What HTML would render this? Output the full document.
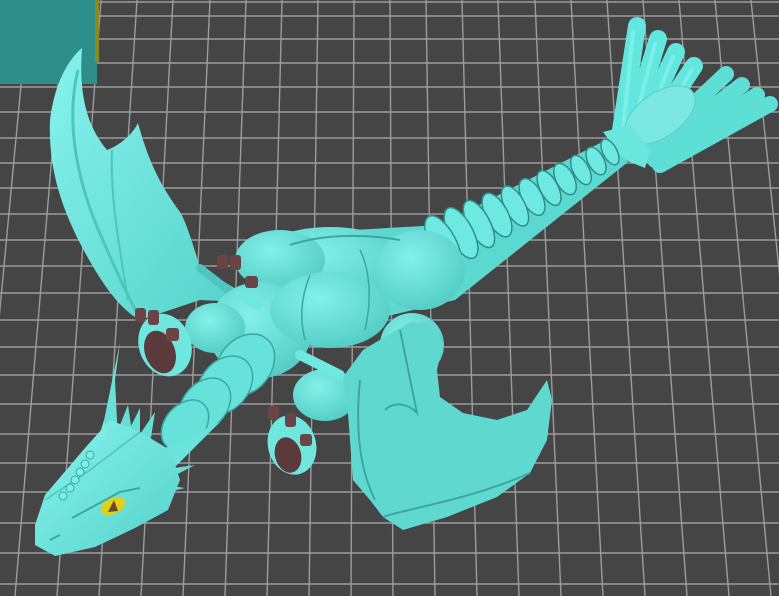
<!DOCTYPE html>
<html><head><meta charset="utf-8"><style>
html,body{margin:0;padding:0;background:#454545;overflow:hidden}
svg{display:block}
</style></head><body>
<svg width="779" height="596" viewBox="0 0 779 596" xmlns="http://www.w3.org/2000/svg">
<defs>
<linearGradient id="t" x1="0" y1="0" x2="1" y2="1"><stop offset="0" stop-color="#86f3ec"/><stop offset="1" stop-color="#55d2ca"/></linearGradient>
<radialGradient id="b" cx="0.4" cy="0.35" r="0.7"><stop offset="0" stop-color="#84f1ea"/><stop offset="1" stop-color="#52ccc4"/></radialGradient>
</defs>
<rect width="779" height="596" fill="#454545"/>
<g stroke="#9c9c9c" stroke-width="1.4" fill="none">
<path d="M0 2H779M0 16H779M0 39H779M0 63H779M0 87H779M0 112H779M0 138H779M0 163H779M0 188H779M0 214H779M0 240H779M0 266H779M0 293H779M0 320H779M0 347H779M0 375H779M0 404H779M0 434H779M0 463H779M0 492H779M0 523H779M0 553H779M0 584H779"/>
<path d="M-7 0L-69 596M29 0L-27 596M65 0L15 596M101 0L57 596M137 0L99 596M173 0L141 596M210 0L183 596M246 0L225 596M282 0L267 596M318 0L309 596M354 0L351 596M390 0L393 596M426 0L435 596M462 0L477 596M498 0L519 596M535 0L561 596M571 0L603 596M607 0L645 596M643 0L687 596M679 0L729 596M715 0L771 596M751 0L813 596M787 0L855 596"/>
</g>
<rect x="0" y="0" width="97" height="84" fill="#2e8e8a"/>
<rect x="95" y="0" width="4" height="62" fill="#8a8a20"/>

<!-- tail fin -->
<g stroke="#62e6dd" stroke-linecap="round" stroke-width="18">
<path d="M618 150L637 26"/><path d="M624 150L658 39"/><path d="M630 152L676 52"/><path d="M636 153L694 66"/>
</g>
<g stroke="#5edfd6" stroke-linecap="round" stroke-width="16">
<path d="M645 150L726 74"/><path d="M650 155L742 85"/><path d="M655 160L757 95"/><path d="M660 165L770 104"/>
</g>
<g stroke="#8cf7f0" stroke-linecap="round" stroke-width="4" opacity="0.6">
<path d="M633 32L622 140"/><path d="M655 44L630 140"/><path d="M673 57L640 140"/><path d="M692 70L650 140"/>
</g>
<ellipse cx="660" cy="115" rx="40" ry="22" transform="rotate(-35 660 115)" fill="#7be9e2" stroke="#58cdc5"/>
<path d="M603 132L630 125L650 150L645 168L625 160Z" fill="#6ae6de"/>

<!-- tail -->
<path d="M318 232L440 225L604 141L628 162L455 300L350 325Z" fill="#5bd9d1"/>
<g fill="#6ee9e1" stroke="#2f8f8a" stroke-width="1.5">
<ellipse cx="610" cy="152" rx="7" ry="14" transform="rotate(-28 610 152)"/>
<ellipse cx="596" cy="161" rx="8" ry="15" transform="rotate(-28 596 161)"/>
<ellipse cx="581" cy="170" rx="8" ry="16" transform="rotate(-28 581 170)"/>
<ellipse cx="565" cy="179" rx="9" ry="17" transform="rotate(-28 565 179)"/>
<ellipse cx="549" cy="188" rx="9" ry="19" transform="rotate(-28 549 188)"/>
<ellipse cx="532" cy="197" rx="10" ry="20" transform="rotate(-28 532 197)"/>
<ellipse cx="515" cy="206" rx="10" ry="22" transform="rotate(-28 515 206)"/>
<ellipse cx="497" cy="215" rx="11" ry="24" transform="rotate(-28 497 215)"/>
<ellipse cx="479" cy="224" rx="11" ry="26" transform="rotate(-28 479 224)"/>
<ellipse cx="461" cy="233" rx="12" ry="28" transform="rotate(-28 461 233)"/>
<ellipse cx="443" cy="243" rx="13" ry="30" transform="rotate(-28 443 243)"/>
</g>

<!-- left wing -->
<path d="M82 48C70 58 55 80 50 120C48 170 62 215 95 270C110 295 125 312 140 320L200 300L240 302L238 290L200 268C192 240 185 220 180 212C160 185 148 160 138 123C132 135 120 145 107 150C90 130 78 100 82 48Z" fill="url(#t)"/>
<path d="M78 70C68 110 70 170 105 245C120 280 130 300 138 315" stroke="#4cc6be" stroke-width="3" fill="none"/>
<path d="M112 150C110 200 120 250 128 300" stroke="#4cc6be" stroke-width="2" fill="none"/>
<path d="M200 268C215 280 230 292 245 300" stroke="#4cc6be" stroke-width="8" stroke-linecap="round" fill="none"/>

<!-- body -->
<g fill="url(#b)">
<ellipse cx="330" cy="265" rx="80" ry="38"/>
<ellipse cx="280" cy="260" rx="45" ry="30"/>
<ellipse cx="420" cy="270" rx="45" ry="40"/>
<ellipse cx="260" cy="330" rx="52" ry="48"/>
<ellipse cx="330" cy="310" rx="60" ry="38"/>
<ellipse cx="215" cy="328" rx="30" ry="25"/>
<ellipse cx="325" cy="395" rx="32" ry="26"/>
</g>
<path d="M290 245C320 235 360 233 400 240" stroke="#3aa8a1" stroke-width="2" fill="none"/>
<path d="M310 275C300 300 300 320 305 340" stroke="#3aa8a1" stroke-width="1.5" fill="none"/>
<path d="M360 250C370 270 372 300 365 330" stroke="#3aa8a1" stroke-width="1.5" fill="none"/>
<path d="M240 295L258 305" stroke="#6fe8df" stroke-width="10" stroke-linecap="round"/>
<path d="M300 355L340 375" stroke="#6fe8df" stroke-width="10" stroke-linecap="round"/>

<!-- front left paw -->
<ellipse cx="165" cy="345" rx="26" ry="32" transform="rotate(-20 165 345)" fill="#6fe6de"/>
<ellipse cx="160" cy="352" rx="15" ry="22" transform="rotate(-20 160 352)" fill="#5a3a3b"/>
<g fill="#6b4546"><rect x="135" y="308" width="11" height="14" rx="3"/><rect x="148" y="310" width="11" height="15" rx="3"/><rect x="166" y="328" width="13" height="13" rx="3"/>
<rect x="217" y="255" width="11" height="14" rx="3"/><rect x="230" y="255" width="11" height="15" rx="3"/><rect x="245" y="276" width="13" height="12" rx="3"/></g>

<!-- neck -->
<g fill="#66e2da" stroke="#3aa8a1" stroke-width="1.5">
<ellipse cx="245" cy="365" rx="26" ry="34" transform="rotate(40 245 365)"/>
<ellipse cx="225" cy="385" rx="24" ry="32" transform="rotate(40 225 385)"/>
<ellipse cx="205" cy="405" rx="22" ry="30" transform="rotate(40 205 405)"/>
<ellipse cx="185" cy="425" rx="20" ry="28" transform="rotate(40 185 425)"/>
</g>

<!-- front right paw -->
<ellipse cx="292" cy="445" rx="24" ry="30" transform="rotate(-15 292 445)" fill="#6fe6de"/>
<ellipse cx="288" cy="455" rx="13" ry="18" transform="rotate(-15 288 455)" fill="#5a3a3b"/>
<g fill="#6b4546"><rect x="268" y="406" width="11" height="14" rx="3"/><rect x="285" y="413" width="11" height="14" rx="3"/><rect x="300" y="434" width="12" height="12" rx="3"/></g>

<!-- hind knee + right wing -->
<circle cx="412" cy="345" r="32" fill="url(#b)"/>
<path d="M343 377L363 350L410 322L427 323L443 343L437 370L440 397L463 413L497 420L527 410L547 380L552 400L547 440L530 473L497 497L447 517L403 530L383 517L370 500L353 480L347 400Z" fill="#5fd8d0"/>
<path d="M385 410C395 400 410 405 417 413L400 330" fill="none" stroke="#3aa8a1" stroke-width="2"/>
<path d="M383 517C400 510 470 500 530 473" fill="none" stroke="#3aa8a1" stroke-width="2"/>
<path d="M360 380C355 430 360 470 375 500" fill="none" stroke="#3aa8a1" stroke-width="2"/>

<!-- horns -->
<path d="M100 440L120 342L115 380L118 440Z" fill="#68e0d8"/>
<path d="M140 460L220 422L170 472Z" fill="#6ae3db"/>
<g fill="#66ddd5"><path d="M118 430L128 405L132 432Z"/><path d="M128 432L140 408L140 436Z"/><path d="M136 440L155 412L150 444Z"/><path d="M160 470L195 465L170 478Z"/><path d="M165 485L185 488L168 492Z"/></g>

<!-- head -->
<path d="M35 525L45 495L85 448L110 420L140 432L170 450L180 480L168 510L135 528L95 547L55 556L35 545Z" fill="url(#t)"/>
<path d="M45 500L90 470L140 432" stroke="#4cc6be" stroke-width="1.5" fill="none"/>
<g fill="#7ef0e8" stroke="#3aa8a1" stroke-width="1"><circle cx="90" cy="455" r="4"/><circle cx="85" cy="464" r="4"/><circle cx="80" cy="472" r="4"/><circle cx="75" cy="480" r="4"/><circle cx="70" cy="488" r="4"/><circle cx="63" cy="496" r="4"/></g>
<path d="M98 440L104 420L108 440Z" fill="#7cebe3"/>
<path d="M72 518L120 492L140 488" stroke="#3aa8a1" stroke-width="2" fill="none"/>
<ellipse cx="113" cy="506" rx="13" ry="8" transform="rotate(-25 113 506)" fill="#e1cf1b"/>
<path d="M108 512L114 500L118 511Z" fill="#6b4a2a"/>
<path d="M50 540L60 535" stroke="#3aa8a1" stroke-width="2"/>
</svg>
</body></html>
